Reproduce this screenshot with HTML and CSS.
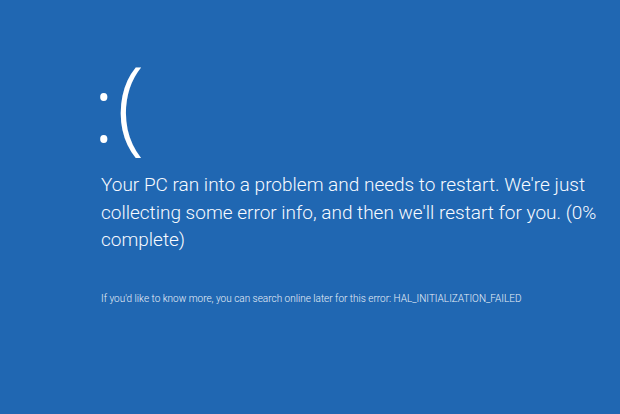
FILE: index.html
```html
<!DOCTYPE html>
<html lang="en">
<head>
<meta charset="utf-8">
<title>Your PC ran into a problem</title>
<link rel="stylesheet" href="styles.css">
</head>
<body>
<main class="screen">
  <div class="face"><span class="face-eyes">:</span><span class="face-mouth">(</span></div>
  <p class="message">Your PC ran into a problem and needs to restart. We're just collecting some error info, and then we'll restart for you. (0% complete)</p>
  <p class="details">If you'd like to know more, you can search online later for this error: HAL_INITIALIZATION_FAILED</p>
</main>
</body>
</html>
```

FILE: styles.css
```css
html, body {
  margin: 0;
  padding: 0;
  width: 100%;
  height: 100%;
  background: #2067b2;
}

.screen {
  box-sizing: border-box;
  width: 620px;
  height: 414px;
  padding: 51px 0 0 101px;
  color: #ffffff;
  font-family: Roboto, "Open Sans", sans-serif;
  display: flex;
  flex-direction: column;
  align-items: flex-start;
}

.face {
  display: flex;
  align-items: baseline;
  height: 100px;
  font-family: "Open Sans", "Noto Sans", sans-serif;
  font-weight: 300;
  line-height: 1;
}

.face-eyes {
  font-size: 90px;
  margin-left: -8px;
  margin-right: 2px;
}

.face-mouth {
  font-size: 103px;
}

.message {
  margin: 0;
  margin-top: 20px;
  width: 505px;
  font-weight: 300;
  font-size: 19px;
  line-height: 27.5px;
  color: #f7faff;
}

.details {
  margin: 0;
  margin-top: 38px;
  font-size: 10px;
  font-weight: 300;
  line-height: 14px;
  color: #e8eff8;
}
```
